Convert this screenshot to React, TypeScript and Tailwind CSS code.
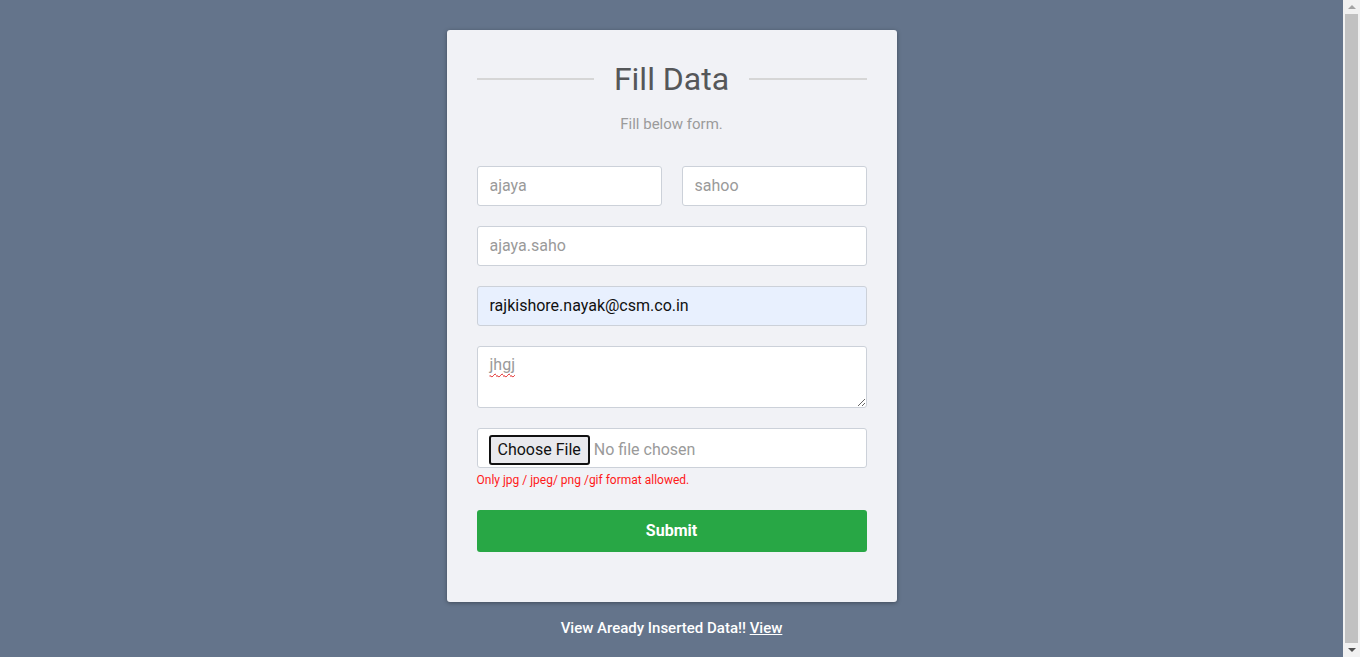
export default function App() {
  return (
    <div
      className="flex h-[657px] overflow-hidden bg-[#64748b]"
      style={{ fontFamily: "Roboto, 'Liberation Sans', sans-serif" }}
    >
      <div className="flex-1 pt-[30px]">
        {/* Card */}
        <div className="mx-auto w-[450px] rounded-[3px] bg-[#f1f2f6] px-[30px] pt-[30px] pb-[50px] shadow-[0_1px_4px_rgba(0,0,0,0.35)]">
          {/* Heading */}
          <div className="flex items-center gap-5">
            <div className="h-[2px] flex-1 bg-[#d6d6d6]" />
            <h1 className="text-[32px] leading-[38px] text-[#555759]">Fill Data</h1>
            <div className="h-[2px] flex-1 bg-[#d6d6d6]" />
          </div>
          <p className="mt-[15px] text-center text-[15px] text-[#9b9b9b]">Fill below form.</p>

          <form className="mt-[30px] flex flex-col">
            <div className="flex gap-5">
              <input
                placeholder="ajaya"
                className="h-10 w-full min-w-0 rounded-[3px] border border-[#ccd1d9] bg-white px-3 text-[16px] text-[#222] outline-none placeholder:text-[#9a9a9a]"
              />
              <input
                placeholder="sahoo"
                className="h-10 w-full min-w-0 rounded-[3px] border border-[#ccd1d9] bg-white px-3 text-[16px] text-[#222] outline-none placeholder:text-[#9a9a9a]"
              />
            </div>
            <input
              placeholder="ajaya.saho"
              className="mt-5 h-10 w-full rounded-[3px] border border-[#ccd1d9] bg-white px-3 text-[16px] text-[#222] outline-none placeholder:text-[#9a9a9a]"
            />
            <input
              defaultValue="rajkishore.nayak@csm.co.in"
              className="mt-5 h-10 w-full rounded-[3px] border border-[#ccd1d9] bg-[#e8f0fe] px-3 text-[16px] text-[#111] outline-none"
            />
            <textarea
              defaultValue="jhgj"
              spellCheck={false}
              className="mt-5 h-[62px] w-full rounded-[3px] border border-[#ccd1d9] bg-white px-3 py-[6px] text-[16px] text-[#9a9a9a] underline decoration-[#e02020] decoration-wavy decoration-1 underline-offset-[3px] outline-none [text-decoration-skip-ink:none]"
            />
            <div className="mt-5 flex h-10 items-center rounded-[3px] border border-[#ccd1d9] bg-white pt-[4px] pl-[11px]">
              <span className="rounded-[3px] border-2 border-[#111] bg-[#e9e9ed] px-[7px] py-[3px] text-[16px] leading-[20px] text-[#111]">
                Choose File
              </span>
              <span className="ml-1 text-[16px] text-[#9a9a9a]">No file chosen</span>
            </div>
            <p className="mt-[3px] text-[12px] leading-[18px] text-[#ff1a1a]">
              Only jpg / jpeg/ png /gif format allowed.
            </p>
            <button
              type="button"
              className="mt-[21px] h-[42px] w-full rounded-[3px] bg-[#28a745] text-[16px] font-bold text-white"
            >
              Submit
            </button>
          </form>
        </div>

        {/* Footer */}
        <p className="mt-[15px] text-center text-[15px] font-medium text-white">
          View Aready Inserted Data!! <a className="underline">View</a>
        </p>
      </div>

      {/* Scrollbar */}
      <div className="flex w-[17px] flex-col items-center bg-[#f1f1f1]">
        <div className="flex h-[14px] items-center">
          <div className="h-0 w-0 border-x-[4px] border-b-[4px] border-x-transparent border-b-[#a3a3a3]" />
        </div>
        <div className="w-[13px] flex-1 bg-[#c1c1c1]" />
        <div className="flex h-[14px] items-center">
          <div className="h-0 w-0 border-x-[4px] border-t-[4px] border-x-transparent border-t-[#505050]" />
        </div>
      </div>
    </div>
  );
}
